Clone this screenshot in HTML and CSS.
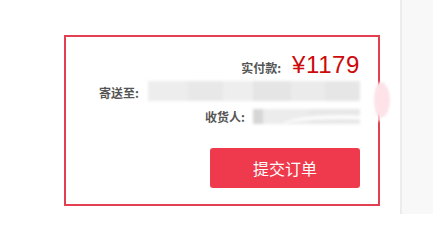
FILE: index.html
```html
<!DOCTYPE html>
<html lang="zh-CN">
<head>
<meta charset="utf-8">
<title>提交订单</title>
<link rel="stylesheet" href="styles.css">
</head>
<body>
<div class="page">
  <div class="main">
    <div class="order-box">
      <div class="row row-total">
        <span class="label">实付款:</span>
        <span class="price">¥1179</span>
      </div>
      <div class="row row-addr">
        <span class="label">寄送至:</span>
        <span class="redact redact-addr">
          <i class="m m1"></i><i class="m m2"></i><i class="m m3"></i><i class="m m4"></i><i class="m m5"></i><i class="m m6"></i>
        </span>
      </div>
      <div class="row row-name">
        <span class="label">收货人:</span>
        <span class="redact redact-name">
          <i class="m n1"></i><i class="m n2"></i><i class="m n3"></i>
        </span>
      </div>
      <div class="row row-btn">
        <button class="submit">提交订单</button>
      </div>
      <div class="smudge"></div>
      <div class="wipe"></div>
    </div>
  </div>
  <div class="side"></div>
</div>
</body>
</html>
```
FILE: styles.css
```css
* { box-sizing: border-box; }
html, body { margin: 0; padding: 0; background: #fff; }
body {
  font-family: "Noto Sans CJK SC", "Liberation Sans", sans-serif;
  font-size: 12px;
  color: #444;
}
.page {
  display: flex;
  width: 433px;
  height: 214px;
  overflow: hidden;
}
.main {
  flex: 0 0 400px;
  padding: 35px 0 0 64px;
}
.side {
  flex: 1;
  border-left: 2px solid #ececec;
  background: #f8f8f8;
}
.order-box {
  position: relative;
  width: 316px;
  height: 171px;
  border: 2px solid #e23f53;
  padding: 16px 18px 16px 0;
  display: flex;
  flex-direction: column;
  align-items: flex-end;
}
.row {
  display: flex;
  justify-content: flex-end;
  align-items: center;
  height: 24px;
  line-height: 24px;
}
.row-total {
  align-items: baseline;
  margin-bottom: 4px;
}
.label {
  color: #555;
  font-weight: 700;
  white-space: nowrap;
}
.row-name .label { margin-right: 3px; }
.price {
  font-family: "Liberation Sans", Arial, sans-serif;
  font-size: 24px;
  color: #cc0a0a;
  margin-left: 11px;
  letter-spacing: 0.6px;
}
.redact {
  display: flex;
  height: 20px;
  filter: blur(1.6px);
}
.redact-addr {
  width: 212px;
  margin-left: 9px;
  margin-top: -4px;
}
.redact-name {
  width: 107px;
  height: 15px;
  margin-left: 5px;
  margin-top: -2px;
}
.m { display: block; height: 100%; }
.m1 { width: 40px; background: #ededed; }
.m2 { width: 35px; background: #e8e8e8; }
.m3 { width: 30px; background: #eeeeee; }
.m4 { width: 38px; background: #e5e5e5; }
.m5 { width: 34px; background: #ebebeb; }
.m6 { width: 35px; background: #e6e6e6; }
.n1 { width: 10px; background: #d6d6d6; }
.n2 { width: 45px; background: #ececec; }
.n3 { width: 52px; background: #e8e8e8; }
.row-btn {
  height: 40px;
  margin-top: 19px;
}
.submit {
  width: 150px;
  height: 40px;
  border: 0;
  border-radius: 3px;
  background: #ee3a4c;
  color: #fff;
  font-family: "Noto Sans CJK SC", sans-serif;
  font-size: 16px;
  padding: 0;
  cursor: pointer;
}
.smudge {
  position: absolute;
  left: 308px;
  top: 45px;
  width: 16px;
  height: 36px;
  border-radius: 40% 60% 60% 40% / 50%;
  background: #fde3e7;
  filter: blur(0.8px);
}
.wipe {
  position: absolute;
  left: 215px;
  top: 78px;
  width: 120px;
  height: 22px;
  border-radius: 50%;
  border-top: 4px solid rgba(255,255,255,0.9);
  filter: blur(1.5px);
}
```
